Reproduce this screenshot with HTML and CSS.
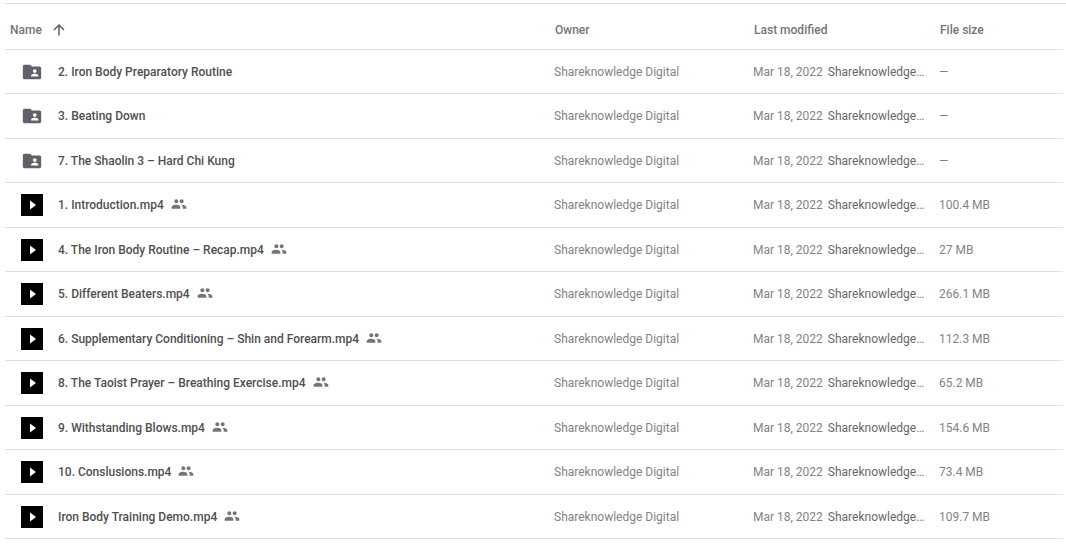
FILE: index.html
```html
<!DOCTYPE html>
<html lang="en">
<head>
<meta charset="utf-8">
<title>Shared files</title>
<link rel="stylesheet" href="styles.css">
</head>
<body>
<svg width="0" height="0" class="sprite" aria-hidden="true">
  <symbol id="folder" viewBox="0 0 24 24"><path d="M20 6h-8l-2-2H4c-1.100 0-1.990.9-1.990 2L2 18c0 1.100.9 2 2 2h16c1.100 0 2-.9 2-2V8c0-1.100-.9-2-2-2zm-5 3c1.100 0 2 .9 2 2s-.9 2-2 2-2-.9-2-2 .9-2 2-2zm4 8h-8v-1c0-1.330 2.670-2 4-2s4 .67 4 2v1z"/></symbol>
  <symbol id="play" viewBox="0 0 22 22"><path d="M0 0h22v22H0z"/><path d="M9 6.500v9l6-4.500z" fill="#fff"/></symbol>
  <symbol id="people" viewBox="0 0 24 24"><path d="M16 11c1.660 0 3-1.340 3-3s-1.340-3-3-3-3 1.340-3 3 1.340 3 3 3zM8 11c1.660 0 3-1.340 3-3S9.660 5 8 5 5 6.340 5 8s1.340 3 3 3zM8 13c-2.330 0-7 1.170-7 3.500V19h13v-2.500C14 14.170 10.330 13 8 13zM15.200 13c1.500 1 2.300 2 2.300 3.500V19H23v-2.500c0-2.330-4.670-3.500-7.800-3.500z"/></symbol>
</svg>
<main class="files">
<table class="list">
  <colgroup><col><col class="col-owner"><col class="col-modified"><col class="col-size"></colgroup>
  <thead>
    <tr><th scope="col"><button class="sort" type="button">Name <svg class="arrow" viewBox="0 0 12 12" aria-hidden="true"><path d="M6 11.500V1M1 6l5-5 5 5"/></svg></button></th><th scope="col">Owner</th><th scope="col">Last modified</th><th scope="col">File size</th></tr>
  </thead>
  <tbody>
    <tr><td><div class="name"><svg class="icon folder"><use href="#folder"/></svg><span>2. Iron Body Preparatory Routine</span></div></td><td>Shareknowledge Digital</td><td><div class="modified">Mar 18, 2022 <span><b>Shareknowledge</b>…</span></div></td><td>—</td></tr>
    <tr><td><div class="name"><svg class="icon folder"><use href="#folder"/></svg><span>3. Beating Down</span></div></td><td>Shareknowledge Digital</td><td><div class="modified">Mar 18, 2022 <span><b>Shareknowledge</b>…</span></div></td><td>—</td></tr>
    <tr><td><div class="name"><svg class="icon folder"><use href="#folder"/></svg><span>7. The Shaolin 3 – Hard Chi Kung</span></div></td><td>Shareknowledge Digital</td><td><div class="modified">Mar 18, 2022 <span><b>Shareknowledge</b>…</span></div></td><td>—</td></tr>
    <tr><td><div class="name"><svg class="icon"><use href="#play"/></svg><span>1. Introduction.mp4</span><svg class="people"><use href="#people"/></svg></div></td><td>Shareknowledge Digital</td><td><div class="modified">Mar 18, 2022 <span><b>Shareknowledge</b>…</span></div></td><td>100.4 MB</td></tr>
    <tr><td><div class="name"><svg class="icon"><use href="#play"/></svg><span>4. The Iron Body Routine – Recap.mp4</span><svg class="people"><use href="#people"/></svg></div></td><td>Shareknowledge Digital</td><td><div class="modified">Mar 18, 2022 <span><b>Shareknowledge</b>…</span></div></td><td>27 MB</td></tr>
    <tr><td><div class="name"><svg class="icon"><use href="#play"/></svg><span>5. Different Beaters.mp4</span><svg class="people"><use href="#people"/></svg></div></td><td>Shareknowledge Digital</td><td><div class="modified">Mar 18, 2022 <span><b>Shareknowledge</b>…</span></div></td><td>266.1 MB</td></tr>
    <tr><td><div class="name"><svg class="icon"><use href="#play"/></svg><span>6. Supplementary Conditioning – Shin and Forearm.mp4</span><svg class="people"><use href="#people"/></svg></div></td><td>Shareknowledge Digital</td><td><div class="modified">Mar 18, 2022 <span><b>Shareknowledge</b>…</span></div></td><td>112.3 MB</td></tr>
    <tr><td><div class="name"><svg class="icon"><use href="#play"/></svg><span>8. The Taoist Prayer – Breathing Exercise.mp4</span><svg class="people"><use href="#people"/></svg></div></td><td>Shareknowledge Digital</td><td><div class="modified">Mar 18, 2022 <span><b>Shareknowledge</b>…</span></div></td><td>65.2 MB</td></tr>
    <tr><td><div class="name"><svg class="icon"><use href="#play"/></svg><span>9. Withstanding Blows.mp4</span><svg class="people"><use href="#people"/></svg></div></td><td>Shareknowledge Digital</td><td><div class="modified">Mar 18, 2022 <span><b>Shareknowledge</b>…</span></div></td><td>154.6 MB</td></tr>
    <tr><td><div class="name"><svg class="icon"><use href="#play"/></svg><span>10. Conslusions.mp4</span><svg class="people"><use href="#people"/></svg></div></td><td>Shareknowledge Digital</td><td><div class="modified">Mar 18, 2022 <span><b>Shareknowledge</b>…</span></div></td><td>73.4 MB</td></tr>
    <tr><td><div class="name"><svg class="icon"><use href="#play"/></svg><span>Iron Body Training Demo.mp4</span><svg class="people"><use href="#people"/></svg></div></td><td>Shareknowledge Digital</td><td><div class="modified">Mar 18, 2022 <span><b>Shareknowledge</b>…</span></div></td><td>109.7 MB</td></tr>
  </tbody>
</table>
</main>
</body>
</html>
```
FILE: styles.css
```css
body {
  margin: 0;
  background: #fff;
  color: #838383;
  font: 400 12px/16px Roboto, sans-serif;
}

.sprite {
  display: none;
}

.files {
  margin: 3px 0 0 5px;
  padding: 0 3px 0 0;
  border-top: 1px solid #e0e0e0;
}

.list {
  width: 100%;
  table-layout: fixed;
  border-collapse: separate;
  border-spacing: 0;
}

.col-owner {
  width: 199px;
}

.col-modified {
  width: 186px;
}

.col-size {
  width: 124px;
}

th,
td {
  box-sizing: border-box;
  height: 44px;
  padding: 0;
  border-bottom: 1px solid #e0e0e0;
  text-align: left;
  vertical-align: middle;
  white-space: nowrap;
}

th {
  height: 46px;
  padding: 6px 0 0 1px;
  color: #757575;
  font-weight: 500;
}

tbody tr:nth-child(even) td {
  height: 45px;
}

.sort {
  display: flex;
  align-items: center;
  gap: 11px;
  padding: 0 0 0 4px;
  border: 0;
  background: none;
  color: inherit;
  font: inherit;
}

.arrow {
  width: 12px;
  height: 12px;
  fill: none;
  stroke: #616161;
  stroke-width: 1.500;
}

.name {
  display: flex;
  align-items: center;
  padding-left: 16px;
  color: #505050;
  font-weight: 500;
}

.icon {
  width: 22px;
  height: 22px;
  margin-right: 15px;
}

.folder {
  fill: #5f6068;
}

.people {
  width: 16px;
  height: 16px;
  margin: 0 0 2px 7px;
  fill: #757575;
}

.modified {
  display: flex;
  gap: 5px;
}

.modified b {
  color: #686868;
  font-weight: 400;
}
```
